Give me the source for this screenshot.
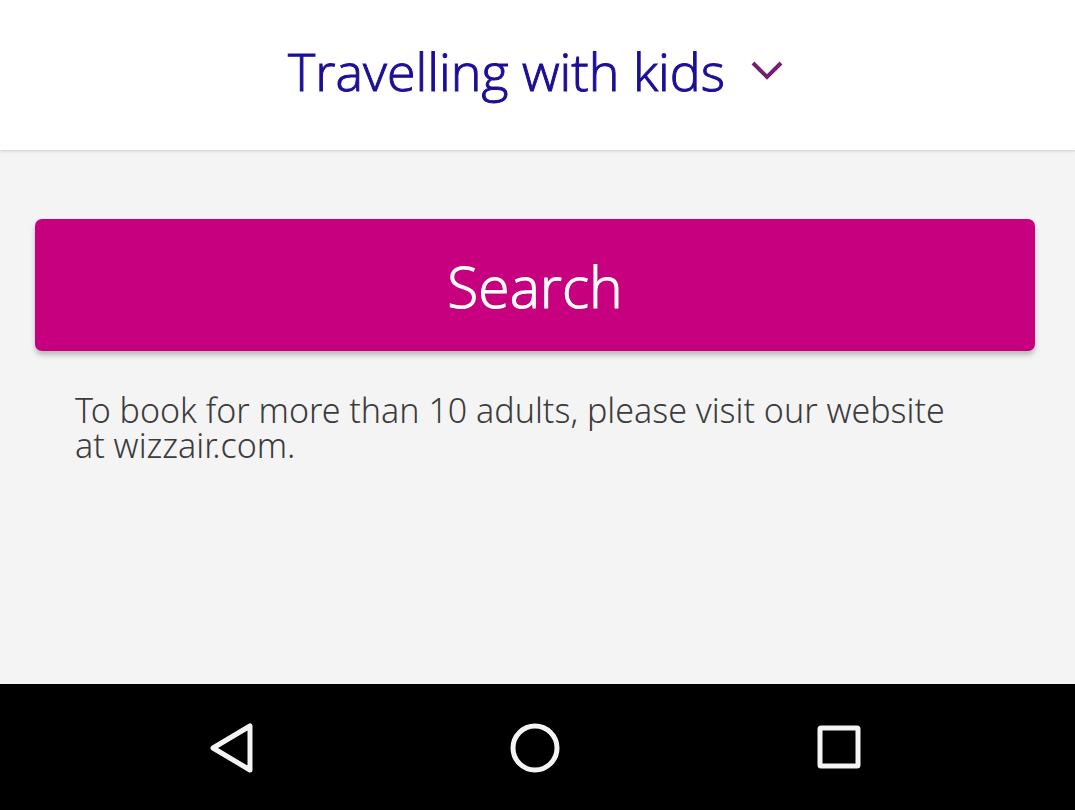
<main class="screen">
  <button class="kids" type="button">
    <span>Travelling with kids</span>
    <svg class="chevron" viewBox="0 0 32 22" aria-hidden="true"><path d="M2 3 L16 17 L30 3" /></svg>
  </button>
  <section class="content">
    <button class="search" type="button">Search</button>
    <p>To book for more than 10 adults, please visit our website at wizzair.com.</p>
  </section>
  <nav aria-label="System navigation">
    <button type="button" aria-label="Back"><svg viewBox="0 0 52 52"><path d="M45 5 V49 L8 27 Z" /></svg></button>
    <button type="button" aria-label="Home"><svg viewBox="0 0 52 52"><circle cx="26" cy="27" r="22" /></svg></button>
    <button type="button" aria-label="Recent apps"><svg viewBox="0 0 52 52"><rect x="7" y="7" width="38" height="38" rx="1" /></svg></button>
  </nav>
</main>

<style>
  :global(body) { margin: 0; }
  .screen {
    min-height: 100vh;
    display: flex;
    flex-direction: column;
    background: #f4f4f4;
    font-family: "Open Sans", "Noto Sans", sans-serif;
    font-weight: 300;
  }
  button { border: 0; margin: 0; font: inherit; cursor: pointer; }
  .kids {
    display: flex;
    align-items: center;
    justify-content: center;
    gap: 26px;
    padding: 39px 4px 47px 0;
    background: #fff;
    color: #1c0f96;
    font-size: 52px;
    line-height: 64px;
    -webkit-text-stroke: 1px;
    box-shadow: 0 1px 3px #ccc;
  }
  .chevron { width: 32px; height: 22px; fill: none; stroke: #74206f; stroke-width: 4; }
  .content { flex: 1; padding: 69px 40px 0 35px; }
  .search {
    display: block;
    width: 100%;
    padding: 34px 0 32px;
    border-radius: 7px;
    background: #c6007e;
    color: #fff;
    font-size: 57px;
    line-height: 66px;
    -webkit-text-stroke: 1px;
    box-shadow: 0 4px 5px #bbb;
  }
  p {
    margin: 42px 64px 0 40px;
    color: #3c3c3c;
    font-family: "Noto Sans", "Open Sans", sans-serif;
    font-size: 34px;
    line-height: 35px;
  }
  nav {
    display: flex;
    justify-content: center;
    gap: 252px;
    padding: 37px 5px 37px 0;
    background: #000;
  }
  nav button { display: flex; padding: 0; background: none; }
  nav svg { width: 52px; height: 52px; fill: none; stroke: #f4f4f4; stroke-width: 5; stroke-linejoin: round; }
</style>
